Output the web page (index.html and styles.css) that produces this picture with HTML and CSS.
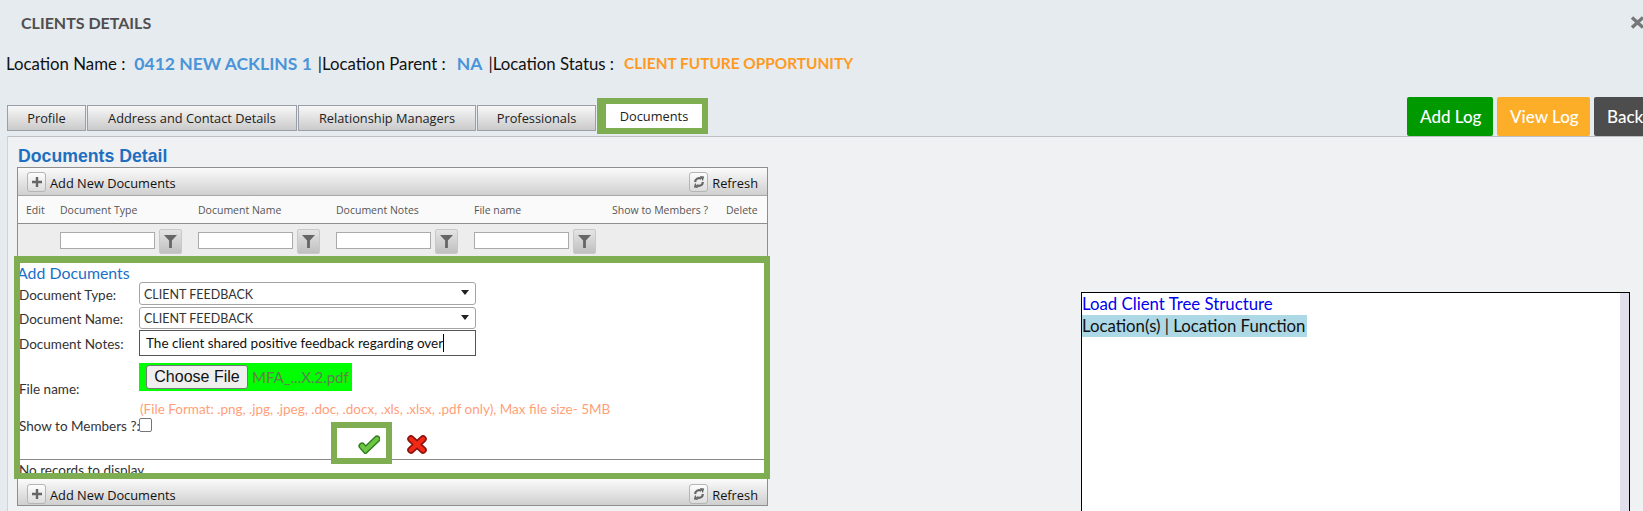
FILE: index.html
```html
<!DOCTYPE html>
<html lang="en">
<head>
  <meta charset="UTF-8">
  <title>Clients Details</title>
  <link rel="stylesheet" href="styles.css">
</head>
<body>
  <header class="page-head">
    <div class="title-row">
      <h1>CLIENTS DETAILS</h1>
      <svg class="close" width="15" height="13" viewBox="0 0 15 13"><path d="M2 1.500L13 11.500M13 1.500L2 11.500" stroke="#777" stroke-width="3.400"/></svg>
    </div>
    <div class="location-row">
      <span>Location Name :</span><b class="loc-value">0412 NEW ACKLINS 1</b>
      <span>|Location Parent :</span><b class="loc-value loc-na">NA</b>
      <span>|Location Status :</span><b class="loc-status">CLIENT FUTURE OPPORTUNITY</b>
    </div>
    <div class="tab-row">
      <nav class="tabs">
        <a class="tab tab-profile">Profile</a>
        <a class="tab tab-address">Address and Contact Details</a>
        <a class="tab tab-managers">Relationship Managers</a>
        <a class="tab tab-pros">Professionals</a>
        <a class="tab tab-active">Documents</a>
      </nav>
      <div class="log-buttons">
        <a class="log-btn log-add">Add Log</a>
        <a class="log-btn log-view">View Log</a>
        <a class="log-btn log-back">Back</a>
      </div>
    </div>
  </header>

  <main class="panel">
    <section class="documents">
      <h2>Documents Detail</h2>
      <div class="grid">
        <div class="toolbar">
          <span class="tool-btn">
            <svg width="12" height="12" viewBox="0 0 12 12"><path d="M6 1v10M1 6h10" stroke="#666" stroke-width="2.400"/></svg>
          </span>
          <span class="tool-label">Add New Documents</span>
          <span class="tool-btn tool-refresh">
            <svg width="12" height="14" viewBox="0 0 14 16"><path d="M2.500 8a4.500 4.500 0 0 1 7-3.700M11.500 8a4.500 4.500 0 0 1-7 3.700" fill="none" stroke="#666" stroke-width="2.600"/><path d="M8 1l5 .5-1.500 5.500zM6 15l-5-.5 1.500-5.500z" fill="#666"/></svg>
          </span>
          <span class="tool-label">Refresh</span>
        </div>
        <div class="col-row">
          <span class="col-edit">Edit</span>
          <span class="col-wide">Document Type</span>
          <span class="col-wide">Document Name</span>
          <span class="col-wide">Document Notes</span>
          <span class="col-wide">File name</span>
          <span class="col-show">Show to Members ?</span>
          <span>Delete</span>
        </div>
        <div class="filter-row">
          <div class="filter"><input class="filter-input" type="text"><span class="filter-btn"><svg width="13" height="15" viewBox="0 0 14 16"><path d="M0 1h14L8.500 7v8h-3V7z" fill="#666"/></svg></span></div>
          <div class="filter"><input class="filter-input" type="text"><span class="filter-btn"><svg width="13" height="15" viewBox="0 0 14 16"><path d="M0 1h14L8.500 7v8h-3V7z" fill="#666"/></svg></span></div>
          <div class="filter"><input class="filter-input" type="text"><span class="filter-btn"><svg width="13" height="15" viewBox="0 0 14 16"><path d="M0 1h14L8.500 7v8h-3V7z" fill="#666"/></svg></span></div>
          <div class="filter"><input class="filter-input" type="text"><span class="filter-btn"><svg width="13" height="15" viewBox="0 0 14 16"><path d="M0 1h14L8.500 7v8h-3V7z" fill="#666"/></svg></span></div>
        </div>

        <form class="add-form">
          <div class="form-title">Add Documents</div>
          <div class="form-row row-type">
            <label>Document Type:</label>
            <div class="select-box">CLIENT FEEDBACK</div>
          </div>
          <div class="form-row row-name">
            <label>Document Name:</label>
            <div class="select-box">CLIENT FEEDBACK</div>
          </div>
          <div class="form-row row-notes">
            <label>Document Notes:</label>
            <div class="notes-box">The client shared positive feedback regarding over<span class="caret"></span></div>
          </div>
          <div class="form-row row-file">
            <label>File name:</label>
            <div class="file-col">
              <div class="file-box"><span class="file-btn">Choose File</span><span class="file-name">MFA_...X.2.pdf</span></div>
              <div class="file-hint">(File Format: .png, .jpg, .jpeg, .doc, .docx, .xls, .xlsx, .pdf only), Max file size- 5MB</div>
            </div>
          </div>
          <div class="form-row row-show">
            <label>Show to Members ?:</label>
            <span class="check-box"></span>
          </div>
          <div class="actions">
            <span class="save-btn">
              <svg width="22" height="19" viewBox="0 0 22 19"><path d="M4 11l3.500 4L19 4" fill="none" stroke="#2f7d1e" stroke-width="7" stroke-linecap="round"/><path d="M4 11l3.500 4L19 4" fill="none" stroke="#6cc644" stroke-width="4.200" stroke-linecap="round"/></svg>
            </span>
            <span class="cancel-btn">
              <svg width="20" height="19" viewBox="0 0 20 19"><path d="M4 4L16 15M16 4L4 15" stroke="#8c1010" stroke-width="7.500" stroke-linecap="round"/><path d="M4 4L16 15M16 4L4 15" stroke="#f02a14" stroke-width="4.400" stroke-linecap="round"/></svg>
            </span>
          </div>
          <div class="no-records">No records to display.</div>
        </form>

        <div class="toolbar toolbar-bottom">
          <span class="tool-btn">
            <svg width="12" height="12" viewBox="0 0 12 12"><path d="M6 1v10M1 6h10" stroke="#666" stroke-width="2.400"/></svg>
          </span>
          <span class="tool-label">Add New Documents</span>
          <span class="tool-btn tool-refresh">
            <svg width="12" height="14" viewBox="0 0 14 16"><path d="M2.500 8a4.500 4.500 0 0 1 7-3.700M11.500 8a4.500 4.500 0 0 1-7 3.700" fill="none" stroke="#666" stroke-width="2.600"/><path d="M8 1l5 .5-1.500 5.500zM6 15l-5-.5 1.500-5.500z" fill="#666"/></svg>
          </span>
          <span class="tool-label">Refresh</span>
        </div>
      </div>
    </section>

    <aside class="tree-box">
      <div class="tree-content">
        <a class="tree-link">Load Client Tree Structure</a>
        <div><span class="tree-head">Location(s) | Location Function</span></div>
      </div>
      <div class="tree-scroll"></div>
    </aside>
  </main>
</body>
</html>
```

FILE: styles.css
```css
* {
  margin: 0;
  padding: 0;
  box-sizing: border-box;
}

html {
  overflow: hidden;
}

body {
  height: 511px;
  overflow: hidden;
  background: #e6ebef;
  font-family: "Lato", sans-serif;
  color: #111;
  display: flex;
  flex-direction: column;
}

/* Top area */
.page-head {
  height: 136px;
  flex: none;
}

.title-row {
  display: flex;
  justify-content: space-between;
  align-items: center;
  height: 44px;
  padding-left: 21px;
}

h1 {
  font-size: 16px;
  font-weight: 700;
  color: #4f4f4f;
}

.close {
  margin-right: -2px;
}

.location-row {
  display: flex;
  align-items: center;
  height: 38px;
  padding-left: 6px;
  font-size: 16.800px;
}

.loc-value {
  font-size: 17.500px;
  color: #4a94d8;
  margin: 0 6px 0 9px;
}

.loc-na {
  margin-left: 11px;
}

.loc-status {
  font-size: 15.400px;
  color: #ff9a1f;
  margin-left: 10px;
}

.tab-row {
  display: flex;
  justify-content: space-between;
  align-items: flex-end;
  height: 54px;
}

.tabs {
  display: flex;
  align-items: flex-start;
  padding-left: 7px;
  height: 38px;
}

.tab {
  display: flex;
  align-items: center;
  justify-content: center;
  height: 26px;
  margin-top: 7px;
  margin-right: 1px;
  padding-bottom: 1px;
  font-family: "Open Sans", sans-serif;
  font-size: 12.800px;
  color: #222;
  background: linear-gradient(#f8f8f8, #cacaca);
  border: 1px solid #9a9ea6;
}

.tab-profile { width: 79px; }
.tab-address { width: 210px; }
.tab-managers { width: 178px; }
.tab-pros { width: 119px; }

.tab-active {
  width: 111px;
  height: 36px;
  margin-top: 0;
  background: #fff;
  border: 6px solid #7fae52;
  border-left-width: 9px;
}

.log-buttons {
  display: flex;
  gap: 4px;
  margin-right: -45px;
}

.log-btn {
  display: flex;
  align-items: center;
  height: 39px;
  padding-left: 13px;
  border-radius: 2px;
  color: #fff;
  font-size: 17px;
  font-weight: 500;
}

.log-add { width: 86px; background: #009900; }
.log-view { width: 93px; background: #fdae28; }
.log-back { width: 94px; background: #4d4d4d; }

/* Panel */
.panel {
  flex: 1;
  margin-left: 7px;
  min-height: 0;
  background: #eff1f3;
  border-top: 1px solid #bdbfc2;
  border-left: 1px solid #cfd2d6;
  display: flex;
  align-items: flex-start;
}

.documents {
  width: 760px;
  padding-left: 9px;
  flex: none;
}

h2 {
  height: 30px;
  margin-left: 1px;
  padding-top: 8px;
  font-family: "Liberation Sans", sans-serif;
  font-size: 17.700px;
  line-height: 23px;
  color: #1e6fc0;
}

.grid {
  width: 751px;
  background: #ededed;
  border: 1px solid #8e8e8e;
  font-family: "Open Sans", sans-serif;
}

.toolbar {
  display: flex;
  align-items: center;
  height: 27px;
  padding: 0 9px;
  background: linear-gradient(#fbfbfb, #cfcfcf);
}

.toolbar-bottom {
  height: 26px;
  padding-top: 3px;
}

.tool-btn {
  display: flex;
  align-items: center;
  justify-content: center;
  width: 19px;
  height: 20px;
  background: linear-gradient(#fdfdfd, #dcdcdc);
  border: 1px solid #b5b5b5;
  border-radius: 3px;
}

.tool-label {
  margin-left: 4px;
  padding-top: 2px;
  font-size: 12.800px;
  color: #111;
}

.tool-refresh {
  margin-left: auto;
}

.col-row {
  display: flex;
  align-items: center;
  height: 29px;
  padding-left: 8px;
  background: #fafafa;
  border-top: 1px solid #a8a8a8;
  border-bottom: 1px solid #8e8e8e;
  font-size: 10.500px;
  color: #555;
}

.col-edit { width: 34px; }
.col-wide { width: 138px; }
.col-show { width: 114px; }

.filter-row {
  display: flex;
  height: 32px;
  padding: 5px 0 0 42px;
}

.filter {
  display: flex;
  align-items: flex-start;
  width: 138px;
}

.filter-input {
  width: 95px;
  height: 17px;
  margin-top: 3px;
  background: #fff;
  border: 1px solid #aaa;
}

.filter-btn {
  display: flex;
  align-items: center;
  justify-content: center;
  width: 23px;
  height: 25px;
  margin-left: 4px;
  background: linear-gradient(#e4e4e4, #c0c0c0);
  border: 1px solid #c8c8c8;
  border-radius: 2px;
}

/* Add form, with its green highlight */
.add-form {
  position: relative;
  height: 223px;
  margin: 0 -3px 0 -4px;
  overflow: hidden;
  background: #fff;
  border: 6px solid #7fae52;
  border-top-width: 7px;
  font-family: "Lato", sans-serif;
  font-size: 13.500px;
  color: #333;
}

.form-title {
  height: 19px;
  line-height: 19px;
  margin-left: -3px;
  font-size: 15.900px;
  color: #1a6fc9;
}

.form-row {
  display: flex;
  align-items: center;
}

.form-row label {
  width: 120px;
  margin-left: -1px;
  padding-top: 2px;
  flex: none;
  white-space: nowrap;
}

.row-type { height: 23px; margin-bottom: 2px; }
.row-name { height: 22px; margin-bottom: 1px; }
.row-notes { height: 26px; margin-bottom: 7px; }

.select-box {
  position: relative;
  width: 337px;
  height: 100%;
  padding: 1px 0 0 4px;
  display: flex;
  align-items: center;
  background: #fff;
  border: 1px solid #a5a5a5;
  border-radius: 3px;
  font-size: 12.500px;
  color: #333;
}

.select-box::after {
  content: "";
  position: absolute;
  right: 6px;
  top: 7px;
  border-left: 4px solid transparent;
  border-right: 4px solid transparent;
  border-top: 5px solid #222;
}

.notes-box {
  display: flex;
  align-items: center;
  width: 337px;
  height: 100%;
  padding-left: 6px;
  border: 1px solid #555;
  color: #111;
  white-space: nowrap;
}

.caret {
  width: 1px;
  height: 18px;
  background: #000;
}

.row-file label {
  align-self: flex-start;
  margin-top: 16px;
}

.file-box {
  display: flex;
  align-items: center;
  width: 213px;
  height: 28px;
  padding-left: 7px;
  background: #00ff00;
  overflow: hidden;
}

.file-btn {
  display: flex;
  align-items: center;
  justify-content: center;
  width: 102px;
  height: 24px;
  background: #efefef;
  border: 1px solid #767676;
  border-radius: 3px;
  font-family: "Liberation Sans", sans-serif;
  font-size: 16px;
  color: #111;
}

.file-name {
  margin-left: 4px;
  font-size: 15px;
  color: #5f7f50;
  white-space: nowrap;
}

.file-hint {
  height: 19px;
  margin-top: 9px;
  padding-left: 1px;
  line-height: 19px;
  color: #ffa07a;
  font-size: 13.500px;
  white-space: nowrap;
}

.row-show {
  height: 14px;
  margin-top: -1px;
}

.check-box {
  width: 13px;
  height: 14px;
  background: #fff;
  border: 1px solid #767676;
  border-radius: 2px;
}

.actions {
  position: relative;
  z-index: 1;
  display: flex;
  align-items: center;
  height: 42px;
  margin: -10px 0 0 311px;
  gap: 15px;
}

.save-btn {
  display: flex;
  align-items: center;
  justify-content: flex-end;
  width: 61px;
  height: 42px;
  padding: 2px 6px 0 0;
  background: #fff;
  border: 6px solid #7fae52;
}

.cancel-btn {
  margin-top: 6px;
}

.no-records {
  height: 20px;
  margin: -5px 0 0 -1px;
  padding-top: 1px;
  line-height: 19px;
  border-top: 1px solid #888;
}

/* Tree box, cut off by the bottom of the window */
.tree-box {
  display: flex;
  width: 549px;
  height: 219px;
  margin: 155px 0 0 313px;
  flex: none;
  background: #fff;
  border: 1px solid #000;
  border-bottom: none;
}

.tree-content {
  flex: 1;
  font-size: 16.800px;
  line-height: 22px;
}

.tree-link {
  display: block;
  color: #0000ee;
}

.tree-head {
  display: inline-block;
  padding-right: 2px;
  background: #add8e6;
  color: #111;
}

.tree-scroll {
  width: 9px;
  background: #e0dfeb;
}
```
